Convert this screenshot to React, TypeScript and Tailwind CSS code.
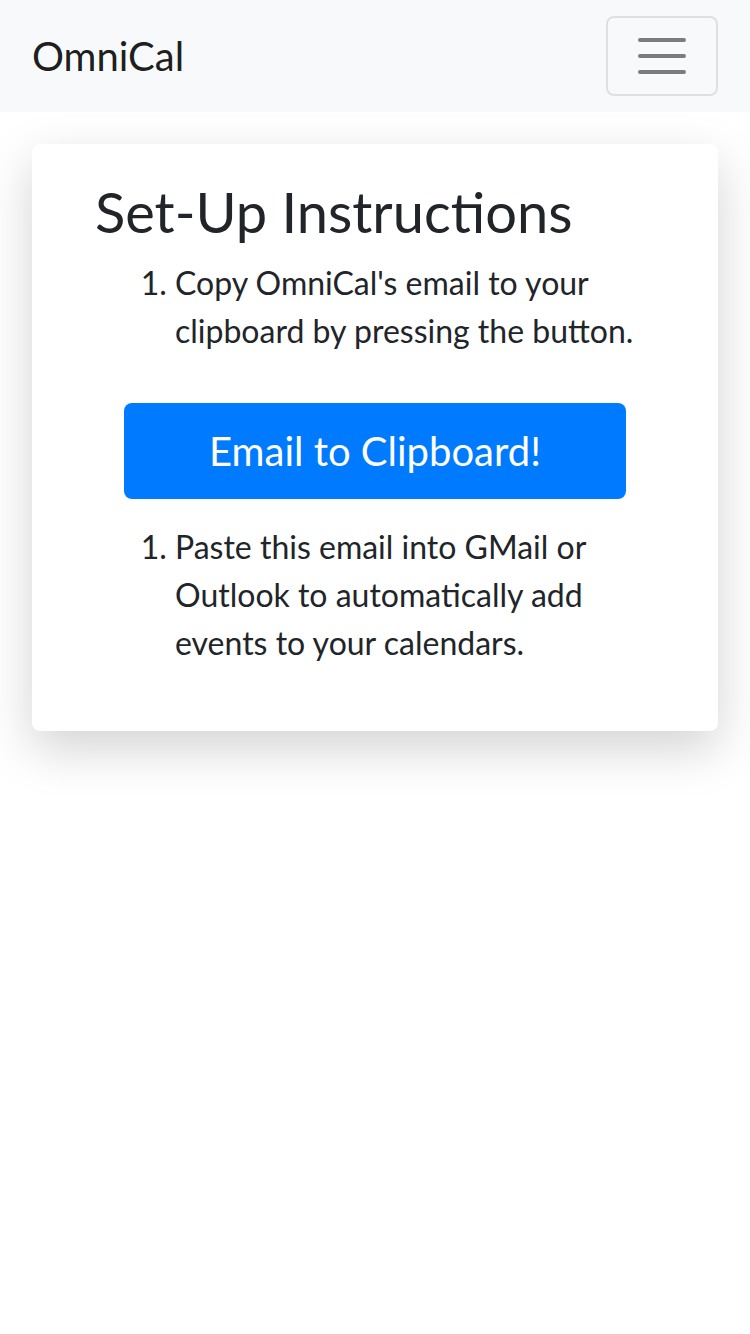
export default function App() {
  return (
    <div className="min-h-screen bg-white text-[#212529] font-['Lato',sans-serif]">
      {/* Navbar */}
      <nav className="h-[112px] bg-[#f8f9fa] flex items-center justify-between pl-8 pr-8">
        <span className="text-[40px] leading-[60px] text-black/90">OmniCal</span>
        <button className="w-[112px] h-[80px] border-2 border-black/10 rounded-lg flex flex-col items-center justify-center gap-[12px]">
          <span className="block w-[48px] h-[4px] rounded-full bg-black/50" />
          <span className="block w-[48px] h-[4px] rounded-full bg-black/50" />
          <span className="block w-[48px] h-[4px] rounded-full bg-black/50" />
        </button>
      </nav>

      {/* Card */}
      <div className="mx-8 mt-8 bg-white rounded-lg shadow-[0_18px_50px_rgba(0,0,0,0.175)] px-[63px] pt-[34px] pb-[64px]">
        <h3 className="text-[56px] leading-[67px] font-normal mb-[14px]">Set-Up Instructions</h3>
        <ol className="list-decimal pl-[80px] text-[32px] leading-[48px]">
          <li>Copy OmniCal's email to your clipboard by pressing the button.</li>
        </ol>
        <div className="flex justify-center mt-[48px] mb-[24px]">
          <button className="w-[502px] h-[96px] bg-[#007bff] text-white text-[40px] rounded-lg">
            Email to Clipboard!
          </button>
        </div>
        <ol className="list-decimal pl-[80px] text-[32px] leading-[48px]">
          <li>Paste this email into GMail or Outlook to automatically add events to your calendars.</li>
        </ol>
      </div>
    </div>
  );
}
